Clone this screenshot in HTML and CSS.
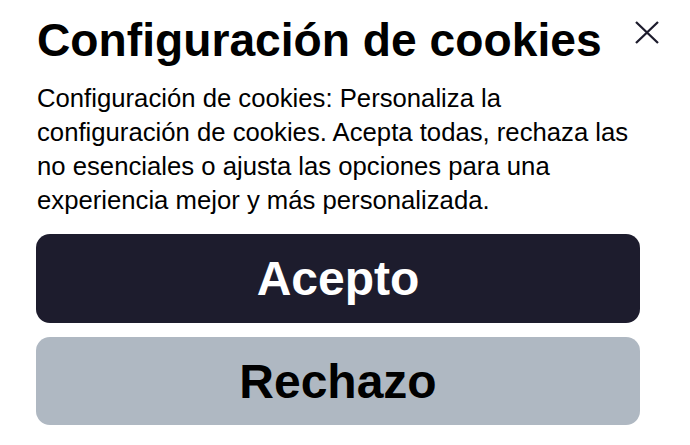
FILE: index.html
```html
<!DOCTYPE html>
<html lang="es">
<head>
<meta charset="utf-8">
<title>Configuración de cookies</title>
<link rel="stylesheet" href="styles.css">
</head>
<body>
<div class="dialog">
  <div class="header">
    <h1 class="title">Configuración de cookies</h1>
    <button class="close" aria-label="Cerrar">
      <svg width="24" height="23" viewBox="0 0 24 23"><path d="M1 1 L23 22 M23 1 L1 22" stroke="#1d1c2d" stroke-width="2.3" fill="none"/></svg>
    </button>
  </div>
  <p class="text">Configuración de cookies: Personaliza la configuración de cookies. Acepta todas, rechaza las no esenciales o ajusta las opciones para una experiencia mejor y más personalizada.</p>
  <div class="actions">
    <button class="btn btn-accept">Acepto</button>
    <button class="btn btn-reject">Rechazo</button>
  </div>
</div>
</body>
</html>
```

FILE: styles.css
```css
html, body {
  margin: 0;
  padding: 0;
  background: #ffffff;
}
body {
  font-family: "Liberation Sans", Arial, sans-serif;
  color: #000000;
}
.dialog {
  width: 604px;
  margin-left: 36px;
  padding-top: 14px;
}
.header {
  display: flex;
  justify-content: space-between;
  align-items: flex-start;
  margin-right: -19px;
}
.title {
  margin: 0;
  font-size: 46.2px;
  line-height: 52px;
  font-weight: 700;
  padding-left: 1px;
}
.close {
  margin: 7px 0 0 0;
  padding: 0;
  border: 0;
  background: none;
  width: 24px;
  height: 23px;
  display: block;
}
.close svg {
  display: block;
}
.text {
  margin: 15px 0 0 0;
  font-size: 25.7px;
  line-height: 34px;
  padding-left: 1px;
}
.actions {
  margin-top: 17px;
  display: flex;
  flex-direction: column;
  gap: 14px;
}
.btn {
  display: block;
  width: 100%;
  border: 0;
  border-radius: 14px;
  font-family: "Liberation Sans", Arial, sans-serif;
  font-weight: 700;
  font-size: 48px;
  padding: 0;
  cursor: pointer;
}
.btn-accept {
  height: 89px;
  background: #1d1c2d;
  color: #ffffff;
}
.btn-reject {
  height: 88px;
  background: #afb8c2;
  color: #000000;
}
```
